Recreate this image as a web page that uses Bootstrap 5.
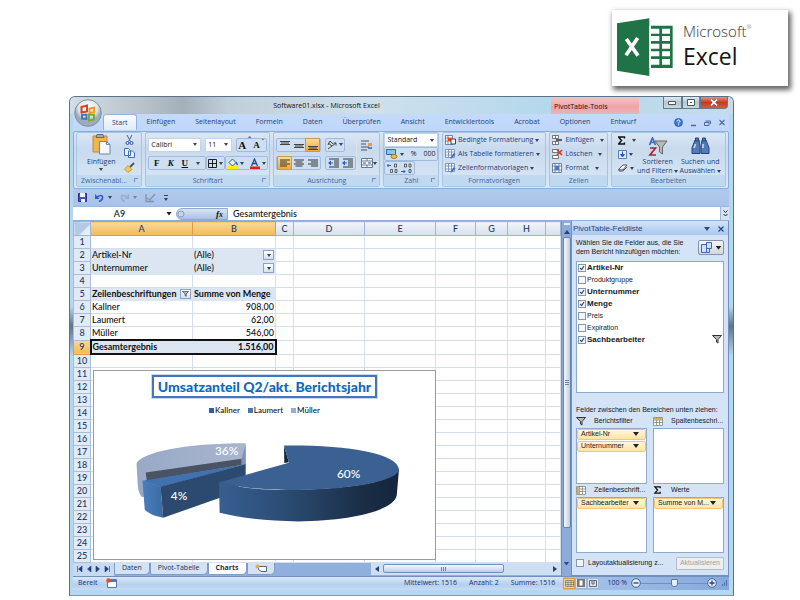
<!DOCTYPE html>
<html lang="de">
<head>
<meta charset="utf-8">
<meta name="viewport" content="width=device-width, initial-scale=1">
<title>Software01.xlsx - Microsoft Excel</title>
<link href="https://cdn.jsdelivr.net/npm/bootstrap@5.3.0/dist/css/bootstrap.min.css" rel="stylesheet">
<style>
:root{--ink:#1f3d7a;--arrow:url("data:image/svg+xml,%3Csvg xmlns='http://www.w3.org/2000/svg' viewBox='0 0 4 3'%3E%3Cpath d='M0 0h4L2 3z' fill='%23345'/%3E%3C/svg%3E")}
body{background:#fff;font-family:"Open Sans","Noto Sans",sans-serif;font-size:7px;font-weight:500;line-height:10px;color:#111}
button,select,input{font:inherit;color:inherit;border:0;background:none;padding:0;margin:0}
svg{display:block;flex:none}
.page-pad{padding:10px 66px 0 69px}
.brand-row{height:86px;margin-right:-54px}
.brand{width:176px;height:76px;background:#fff;box-shadow:2px 3px 5px 1px #666;padding:0 0 0 5px}
.brand-text{padding:0 0 2px 10px}
.brand-ms{font-size:15px;line-height:18px;font-weight:300;color:#333}
.brand-ms sup{font-size:6px;top:-8px}
.brand-xl{font-size:23px;line-height:32px;font-weight:400;color:#151515}
.win{border:1px solid #5b7187;border-radius:6px 6px 0 0;background:linear-gradient(#b5d7f0 0,#b5d7f0 42%,#5c7688 46%,#b5d7f0 52%,#b5d7f0);padding:0 4px 5px 3px;border-bottom:1px solid #7f9aac;position:relative}
.titlebar{height:17px;margin:0 -4px 0 -3px;border-radius:5px 5px 0 0;background:linear-gradient(90deg,#d3dde5 0,#b4bfc8 12%,#a3b0ba 17%,#c1cfda 24%,#cfe0ec 45%,#b4d8ec 72%,#c4dcea 100%)}
.orb-space{width:32px}
.ctx-title{width:88px;align-self:stretch;background:linear-gradient(#edc5ca,#f3a3a3 60%,#e2b6c2);padding:5px 3px 0}
.win-controls{width:94px;padding:0 5px 0 24px}
.wbtn{height:12px;border:1px solid #66788a;border-top:0;background:linear-gradient(#e3ebf1,#b4c6d4 50%,#c9dae6);width:19px}
.wbtn.close-x{width:28px;background:linear-gradient(#e09485,#c33b22 50%,#d35c40);border-radius:0 0 4px 0}
.orb{position:absolute;left:4px;top:2px;width:28px;height:28px}
.tabs{height:17px;background:linear-gradient(#c5dafa,#bfd7fa);padding-left:30px;color:var(--ink)}
.tabs button{padding:0 10px;height:16px}
.tabs .on{background:linear-gradient(#fafcff,#dfebf9);border:1px solid #93b1dc;border-bottom:0;border-radius:3px 3px 0 0;padding:0 8px}
.tabs .ctx{width:88px}
.tabs .mdi{width:94px;padding:0 4px 0 38px}
.ribbon{background:linear-gradient(#dbe7f5,#c9daee 30%,#d8e8f6);border:1px solid #8aaedb;border-radius:2px;height:58px;padding:0 2px 1px;gap:3px;color:var(--ink)}
.rgroup{border:1px solid #a9c3e3;border-radius:2px;min-width:0;display:flex;flex-direction:column;overflow:hidden}
.rbody{flex:1;min-height:0;padding:0 2px}
.rlabel{flex:none;background:#c1d8f1;height:11px;line-height:11px;color:#3f64a2;text-align:center;position:relative}
.rlabel i{position:absolute;right:3px;top:3px;width:4px;height:4px;border:1px solid #7090bd;border-right:0;border-bottom:0}
.g1{flex:66 1 0}.g2{flex:126 1 0}.g3{flex:108 1 0}.g4{flex:55 1 0}.g5{flex:105 1 0}.g6{flex:58 1 0}.g7{flex:116 1 0}
.cluster{border:1px solid #9fbbe0;border-radius:2px;background:#cfdff2;height:14px;display:inline-flex;align-items:center;gap:1px;padding:0 1px}
.cluster button{height:12px;min-width:13px;display:inline-flex;align-items:center;justify-content:center;gap:2px}
.cluster .hot{background:linear-gradient(#fbdb9a,#f3a838);box-shadow:0 0 0 1px #c69a50}
.serif{font-family:"Liberation Serif",serif;font-weight:700;color:#111;font-size:9px}
.serif.big{font-size:11px}
.dd{width:4px;height:3px;background:var(--arrow) center/4px 3px no-repeat;flex:none;display:inline-block}
.combo{appearance:none;background:#fff var(--arrow) right 3px center/4px 3px no-repeat;height:14px;padding:0 2px;color:#111;border:1px solid #c1d4ec;border-radius:0}
.combo.size{width:27px}
.line-btn{display:flex;align-items:center;gap:2px;height:14px;white-space:nowrap}
.big-btn{display:flex;flex-direction:column;align-items:center;line-height:9px;white-space:nowrap}
.qat{height:17px;background:linear-gradient(#b1c9ec,#a8c3ea);padding:0 5px;gap:8px}
.fbar{height:15px;background:#fff;border-top:1px solid #9db8df;border-bottom:1px solid #8fadd6;font-family:Lato,"Open Sans",sans-serif;font-size:9px}
.namebox{width:93px}
.fx-pill{width:52px;margin:1px 0 0 4px;height:12px;border-radius:6px 0 0 6px;background:linear-gradient(#d9e5f4,#a9c1e2);border:1px solid #8daad2;padding-right:4px}
.fbar input{flex:1;min-width:0;padding-left:5px;outline:0}
.fend{width:9px;background:#d5e3f5;border-left:1px solid #9db8df}
.sheet-wrap{flex:1;min-width:0;position:relative;background:#fff}
.grid{table-layout:fixed;width:100%;border-collapse:collapse;font-family:Lato,"Open Sans",sans-serif;font-size:9px;line-height:12px;background:#fff}
.grid th,.grid td{height:13px;padding:0 1px;border:1px solid #d4dfee;font-weight:500;white-space:nowrap;overflow:hidden}
.grid thead th{height:14px;padding-top:1px;background:linear-gradient(#f1f5fa,#d5dfea);border-color:#9fb5d3;text-align:center;color:#223a66}
.grid thead th.sel,.grid tbody th.sel{background:linear-gradient(#f9d89a,#f1bb57);border-color:#d99d4a}
.grid thead th.corner{background:linear-gradient(135deg,#b4c9e6 60%,#e6eef8 61%)}
.grid tbody th{background:#e1eaf5;text-align:center;color:#223a66;border-color:#a9bdd9}
.grid .pv td:nth-child(2),.grid .pv td:nth-child(3){background:#dce6f3;border-color:#dce6f3}
.grid .strong td{font-weight:700}
.grid .num{text-align:right}
.grid tr.total td:nth-child(2){border:2px solid #111;border-right:0}
.grid tr.total td:nth-child(3){border:2px solid #111;border-left:0}
.fbtn{float:right;width:11px;height:10px;margin-top:1px;border:1px solid #8da3c4;background:linear-gradient(#fff,#d4deed);display:flex;align-items:center;justify-content:center}
.chart{position:absolute;left:20px;top:149px;width:343px;height:190px;background:#fff;border:1px solid #9a9a9a;font-family:Lato,"Open Sans",sans-serif}
.chart-title{position:absolute;left:0;right:0;top:4px;text-align:center}
.chart-title span{display:inline-block;border:2px solid #4377b8;outline:1px solid #c9d9ee;color:#0e6ac0;font-size:14px;line-height:19px;font-weight:900;padding:0 4px}
.legend{position:absolute;left:0;right:0;top:34px;display:flex;justify-content:center;gap:8px;font-size:8px}
.legend b{display:inline-block;width:5px;height:5px;margin-right:1px}
.chart svg{width:100%;height:100%}
.sheet-tabs{height:13px;background:#8fb0dc;color:#1c2f55}
.sheet-tabs .navs{background:#c6daf4;height:100%;padding:0 4px}
.stab{background:#d3e2f5;border:1px solid #7e9cc8;border-top:0;height:12px;padding:0 7px;border-radius:0 0 5px 2px}
.stab.on{background:#fff;font-weight:700}
.hscroll{width:190px;height:12px;background:#cfdff2;gap:4px;padding:0 4px}
.thumb-h{width:121px;height:9px;border:1px solid #6f91c2;border-radius:2px;background:linear-gradient(#f6f9fd,#b9cde8)}
.vscroll{width:10px;background:#8dabd8;border-left:1px solid #6f90c0;padding:2px 0}
.thumb-v{width:8px;height:291px;border:1px solid #6484b4;border-radius:2px;background:linear-gradient(90deg,#f6f9fd,#bccde4)}
.pane{width:158px;background:#d4e3f5;border:1px solid #6f90c0;border-top:0;font-family:"Liberation Sans",sans-serif;color:#16191f;padding:0 4px}
.pane-head{height:14px;padding-top:2px;background:linear-gradient(#d3e4f9,#a9c7ed);margin:0 -4px;padding-left:1px;padding-right:4px;color:#1f4187;font-size:8px}
.pane-box{background:#fff;border:1px solid #8fa9cc}
.fields{height:132px;padding:0 1px}
.fields label{display:flex;align-items:center;gap:1px;height:12px;line-height:12px}
.fields .fw-bold{font-size:8px}
.chk{appearance:none;width:8px;height:8px;border:1px solid #8a97a8;background:#f4f6f8;flex:none}
.chk:checked{background:#f4f6f8 url("data:image/svg+xml,%3Csvg xmlns='http://www.w3.org/2000/svg' viewBox='0 0 8 8'%3E%3Cpath d='M1.500 4l2 2.200L6.600 1.500' fill='none' stroke='%23284a94' stroke-width='1.500'/%3E%3C/svg%3E") center/6px 6px no-repeat}
.zones{display:grid;grid-template-columns:1fr 1fr;gap:0 6px}
.zone-name{height:13px;gap:8px;white-space:nowrap}
.zone{height:56px}
.chip{width:100%;height:11px;margin-bottom:1px;background:linear-gradient(#fff6dc,#ffe3a3);border:1px solid #f3c678;border-radius:2px;padding:0 6px 0 3px;display:flex;justify-content:space-between;align-items:center;white-space:nowrap}
.tri{width:6px;height:4px;background:#222;clip-path:polygon(0 0,100% 0,50% 100%);flex:none}
.tri.blue{background:#2a4b88}
.view-btn{width:26px;height:15px;border:1px solid #8292a8;border-radius:2px;background:linear-gradient(#f3f5f7,#d3d8de)}
.update{border:1px solid #b5bdc8;background:#eceff0;color:#a2a29a;height:13px;padding:0 3px;border-radius:1px}
.status{height:14px;background:linear-gradient(#dbe8f8,#b4cff0 60%,#c7dbf4);border-top:1px solid #6f90c0;color:#1c2f6a;padding:0 5px}
.view{width:12px;height:11px;border:1px solid #9db5d6;background:#dce6f2;display:flex;align-items:center;justify-content:center}
.view.on{background:#fcd488;border-color:#d99d4a}
.zoombar{appearance:none;width:66px;height:11px;background:linear-gradient(#6f8fc0,#6f8fc0) center/100% 1px no-repeat}
.zoombar::-webkit-slider-thumb{appearance:none;width:7px;height:8px;border:1px solid #5b76a5;border-radius:1px 1px 3px 3px;background:#e6eefa}
.zr{background:linear-gradient(90deg,#a9c4ea,#86a9dc);height:13px;padding-right:1px;margin-right:-5px}
</style>
</head>
<body>
<svg width="0" height="0" class="position-absolute" aria-hidden="true">
<defs>
<symbol id="i-lines" viewBox="0 0 10 8"><path d="M0 1h10M0 3h7M0 5h10M0 7h7" stroke="#333" stroke-width="1"/></symbol>
<symbol id="i-linesc" viewBox="0 0 10 8"><path d="M0 1h10M1.500 3h7M0 5h10M1.500 7h7" stroke="#333"/></symbol>
<symbol id="i-linesr" viewBox="0 0 10 8"><path d="M0 1h10M3 3h7M0 5h10M3 7h7" stroke="#333"/></symbol>
<symbol id="i-vt" viewBox="0 0 10 10"><path d="M0 1.500h10M0 4.500h10M1 3h8" stroke="#444"/></symbol>
<symbol id="i-vm" viewBox="0 0 10 10"><path d="M0 4.500h10M0 7.500h10M1 6h8" stroke="#444"/></symbol>
<symbol id="i-vb" viewBox="0 0 10 10"><path d="M0 6.500h10M0 9.500h10M1 8h8" stroke="#444"/></symbol>
<symbol id="i-ind" viewBox="0 0 11 10"><path d="M1 1h10M6 3h5M6 5h5M6 7h5M1 9h10" stroke="#333"/><path d="M0 5l3-2.500v5z" fill="#2d5bb5"/><path d="M2 5h3" stroke="#2d5bb5"/></symbol>
<symbol id="i-funnel" viewBox="0 0 10 9"><path d="M.5.5h9L6 4.500v3.500L4.500 7V4.500z" fill="#bbb" stroke="#333"/></symbol>
<symbol id="i-cells" viewBox="0 0 11 10"><path d="M.5.5h6v3h-6zM.5 6.500h6v3h-6zM3.500.5v3M3.500 6.500v3" fill="#fff" stroke="#555" stroke-width=".8"/><path d="M4 5h6" stroke="#333" stroke-width="1.500"/></symbol>
<symbol id="i-tbl" viewBox="0 0 11 10"><path d="M.5.5h9v8h-9zM.5 3h9M.5 6h9M3.500 0v8M6.500 0v8" fill="#fff" stroke="#6b84ad" stroke-width=".8"/><path d="M5 9l4-5 1.500 1.500-4 4z" fill="#3a6ec4"/></symbol>
<symbol id="i-small" viewBox="0 0 10 9"><path d="M.5.5h9v8h-9zM.5 3h9M.5 5.500h9M3.500 0v8M6.500 0v8" fill="#fff" stroke="#777" stroke-width=".7"/><path d="M1 1h8v2H1z" fill="#d7b25c"/></symbol>
<symbol id="i-smallr" viewBox="0 0 10 9"><path d="M.5.5h9v8h-9zM.5 3h9M.5 5.500h9M3.500 0v8M6.500 0v8" fill="#fff" stroke="#777" stroke-width=".7"/><path d="M1 1h2.500v7H1z" fill="#d7b25c"/></symbol>
</defs>
</svg>

<div class="page-pad">
<header class="brand-row d-flex justify-content-end align-items-start">
  <div class="brand d-flex align-items-center">
    <svg width="56" height="60" viewBox="50 56 168 180" aria-hidden="true"><path d="M50 72l97-15v173l-97-16z" fill="#1f7346"/><path d="M150 79h67v127h-67z" fill="#1f7346"/><path d="M152 88h25v15h-25zM185 88h24v15h-24zM152 110h25v15h-25zM185 110h24v15h-24zM152 133h25v15h-25zM185 133h24v15h-24zM152 156h25v15h-25zM185 156h24v15h-24zM152 179h25v17h-25zM185 179h24v17h-24z" fill="#fff"/><path d="M147 79h5v127h-5z" fill="#fff"/><path d="M78 119l35 50M112 116l-35 52" stroke="#fff" stroke-width="11"/></svg>
    <div class="brand-text"><div class="brand-ms">Microsoft<sup>®</sup></div><div class="brand-xl">Excel</div></div>
  </div>
</header>

<main class="win">
  <div class="titlebar d-flex align-items-start">
    <div class="orb-space"></div>
    <div class="flex-grow-1 text-center pt-1">Software01.xlsx - Microsoft Excel</div>
    <div class="ctx-title">PivotTable-Tools</div>
    <div class="win-controls d-flex">
      <button class="wbtn d-flex justify-content-center align-items-center" aria-label="Minimieren"><svg width="8" height="4" viewBox="0 0 8 4"><path d="M.5.5h7v3h-7z" fill="#fff" stroke="#555"/></svg></button>
      <button class="wbtn d-flex justify-content-center align-items-center" aria-label="Wiederherstellen"><svg width="8" height="7" viewBox="0 0 8 7"><path d="M.5.5h7v6h-7z" fill="#fff" stroke="#555"/><path d="M3 3h2v1H3z" fill="#555"/></svg></button>
      <button class="wbtn close-x d-flex justify-content-center align-items-center" aria-label="Schließen"><svg width="8" height="7" viewBox="0 0 8 7"><path d="M1 .5l6 6M7 .5l-6 6" stroke="#733" stroke-width="2.800"/><path d="M1 .5l6 6M7 .5l-6 6" stroke="#fff" stroke-width="1.800"/></svg></button>
    </div>
  </div>

  <nav class="tabs d-flex">
    <button class="on">Start</button><button>Einfügen</button><button>Seitenlayout</button><button>Formeln</button><button>Daten</button><button>Überprüfen</button><button>Ansicht</button><button>Entwicklertools</button><button>Acrobat</button>
    <div class="ctx d-flex justify-content-between ms-auto"><button>Optionen</button><button class="px-0">Entwurf</button></div>
    <div class="mdi d-flex align-items-center justify-content-between">
      <svg width="9" height="9" viewBox="0 0 9 9"><circle cx="4.500" cy="4.500" r="4" fill="#3d79d8" stroke="#1e4b9c" stroke-width=".7"/><path d="M3 3.500q0-1.500 1.500-1.500T6 3.300Q6 4 4.600 4.800v.7M4.600 6.300v1" fill="none" stroke="#fff"/></svg>
      <svg width="6" height="8" viewBox="0 0 6 8"><path d="M0 6.500h5" stroke="#4e6996" stroke-width="1.500"/></svg>
      <svg width="7" height="6" viewBox="0 0 7 6"><path d="M1.500 1h5v3M.5 2.500h4.500v3H.5z" fill="none" stroke="#4e6996"/></svg>
      <svg width="6" height="7" viewBox="0 0 6 7"><path d="M.5 1l5 5M5.500 1l-5 5" stroke="#4e6996" stroke-width="1.100"/></svg>
    </div>
  </nav>
  <button class="orb" aria-label="Office"><svg width="28" height="28" viewBox="0 0 28 28"><defs><radialGradient id="og" cy=".3"><stop stop-color="#fff"/><stop offset=".7" stop-color="#dfe5ec"/><stop offset="1" stop-color="#9eabbb"/></radialGradient></defs><circle cx="14" cy="14" r="13.300" fill="url(#og)" stroke="#7f8fa5"/><g fill="none" stroke-width="2"><path d="M7.500 8l5.500-1.500v6l-5.500 1z" stroke="#d9431f"/><path d="M15.500 9.500l4.500-.8v4.500l-4.500.5z" stroke="#f29a2b"/><path d="M8 16l4.500-.5v4.500l-4.500-.5z" stroke="#3c76c8"/><path d="M15 15.500l5 .3v4.700l-5 1z" stroke="#7cae2a"/></g></svg></button>

  <section class="ribbon d-flex">
    <div class="rgroup g1"><div class="rbody d-flex justify-content-between">
      <button class="big-btn justify-content-between ps-2"><svg width="19" height="22" viewBox="0 0 19 22"><path d="M1 3h14v16H1z" fill="#efb454" stroke="#c08a34"/><path d="M5 1.500h6l1 3H4z" fill="#aab" stroke="#667"/><path d="M7.500 8.500h7l3.500 3v9.500H7.500z" fill="#f5f9ff" stroke="#6c86b1"/><path d="M14.500 8.500v3H18" fill="none" stroke="#6c86b1"/></svg><span>Einfügen</span><i class="dd mb-1"></i></button>
      <div class="d-flex flex-column justify-content-around align-items-center pe-1">
        <svg width="9" height="10" viewBox="0 0 9 10"><path d="M2 0l3.500 6.500M7 0L3.500 6.500" stroke="#46618f"/><circle cx="2.500" cy="8" r="1.500" fill="none" stroke="#2c55a8"/><circle cx="6.500" cy="8" r="1.500" fill="none" stroke="#2c55a8"/></svg>
        <svg width="11" height="10" viewBox="0 0 11 10"><path d="M.5.5h4l2 2v5h-6zM4.500 3h4l2 2v4.500h-6z" fill="#eaf2fe" stroke="#456fb5"/></svg>
        <svg width="11" height="11" viewBox="0 0 11 11"><path d="M10 1L6 5" stroke="#555" stroke-width="2"/><path d="M4 3.500l4 4L4 10.500.5 7z" fill="#f4c851" stroke="#b08828" stroke-width=".7"/></svg>
      </div></div><div class="rlabel text-start ps-1">Zwischenabl...<i></i></div></div>

    <div class="rgroup g2"><div class="rbody d-flex flex-column justify-content-evenly">
      <div class="d-flex gap-1"><select class="combo flex-grow-1" aria-label="Schriftart"><option>Calibri</option></select><select class="combo size" aria-label="Schriftgrad"><option>11</option></select>
        <span class="cluster"><button class="serif big">A<sup>ˆ</sup></button><button class="serif">A<sup>ˇ</sup></button></span></div>
      <div class="d-flex justify-content-between"><span class="cluster"><button class="serif">F</button><button class="serif fst-italic">K</button><button class="serif text-decoration-underline">U</button><i class="dd mx-1"></i></span>
        <span class="cluster"><button aria-label="Rahmen"><svg width="9" height="9" viewBox="0 0 9 9"><path d="M.5.5h8v8h-8zM4.500 0v9M0 4.500h9" fill="none" stroke="#222"/></svg><i class="dd"></i></button></span>
        <span class="cluster"><button aria-label="Füllfarbe"><svg width="11" height="11" viewBox="0 0 11 11"><path d="M1 8h10v3H1z" fill="#fdf000"/><path d="M2 4.500l3.500-3.500 3.500 3.500L5.500 8z" fill="#e8eef6" stroke="#555"/><path d="M9 4l1.500 3" stroke="#2c62c4" stroke-width="1.500"/></svg><i class="dd"></i></button><button class="ms-1" aria-label="Schriftfarbe"><svg width="11" height="11" viewBox="0 0 11 11"><path d="M1 8.500h10v2.500H1z" fill="#e51c1c"/><path d="M2.500 8l3-7 3 7M3.500 5.500h4" fill="none" stroke="#234a95" stroke-width="1.300"/></svg><i class="dd"></i></button></span></div>
      </div><div class="rlabel">Schriftart<i></i></div></div>

    <div class="rgroup g3"><div class="rbody d-flex justify-content-between">
      <div class="d-flex flex-column justify-content-evenly">
        <div class="d-flex gap-1"><span class="cluster"><button aria-label="Oben"><svg width="10" height="10"><use href="#i-vt"/></svg></button><button aria-label="Mitte"><svg width="10" height="10"><use href="#i-vm"/></svg></button><button class="hot" aria-label="Unten"><svg width="10" height="10"><use href="#i-vb"/></svg></button></span><span class="cluster"><button aria-label="Ausrichtung"><svg width="10" height="10" viewBox="0 0 10 10"><path d="M1 9L9 3M6.500 3H9v2.500M1 3l4 3M3 1l3 3M1 5l2-4" fill="none" stroke="#444"/></svg><i class="dd"></i></button></span></div>
        <div class="d-flex gap-1"><span class="cluster"><button class="hot" aria-label="Links"><svg width="10" height="8"><use href="#i-lines"/></svg></button><button aria-label="Zentriert"><svg width="10" height="8"><use href="#i-linesc"/></svg></button><button aria-label="Rechts"><svg width="10" height="8"><use href="#i-linesr"/></svg></button></span><span class="cluster"><button aria-label="Einzug verkleinern"><svg width="11" height="10"><use href="#i-ind"/></svg></button><button aria-label="Einzug vergrößern"><svg width="11" height="10"><use href="#i-ind"/></svg></button></span></div>
      </div>
      <div class="d-flex flex-column justify-content-evenly border-start ps-1">
        <svg width="12" height="11" viewBox="0 0 12 11"><path d="M0 1h8M0 4h5M0 7h8M0 10h6" stroke="#555"/><path d="M7 3h4v3H7z" fill="#e39a4c"/><path d="M11 8H7" stroke="#2c62c4" stroke-width="1.500"/></svg>
        <div class="d-flex align-items-center"><svg width="12" height="10" viewBox="0 0 12 10"><path d="M.5.5h11v9H.5zM.5 3h11M.5 7h11M6 0v3M6 7v3" fill="#fff" stroke="#678"/><path d="M2 5h3M7 5h3" stroke="#24c"/></svg><i class="dd"></i></div>
      </div></div><div class="rlabel">Ausrichtung<i></i></div></div>

    <div class="rgroup g4"><div class="rbody px-0">
      <select class="combo w-100 d-block" aria-label="Zahlenformat"><option>Standard</option></select>
      <div class="cluster d-flex justify-content-between mt-0"><button aria-label="Währung"><svg width="12" height="10" viewBox="0 0 12 10"><path d="M.5.5h9v5h-9z" fill="#8fc3e8" stroke="#3566a8"/><ellipse cx="8" cy="7.500" rx="3" ry="2" fill="#f1c24a" stroke="#a77c1c"/></svg><i class="dd"></i></button><button class="text-dark">%</button><button class="text-dark">000</button></div>
      <div class="cluster"><button aria-label="Dezimalstelle hinzufügen"><svg width="12" height="11" viewBox="0 0 12 11"><path d="M0 2.500h4M1.500 1L0 2.500 1.500 4" fill="none" stroke="#2c62c4"/><path d="M7.500 1h2v3h-2zM3.500 6.500h2v3h-2zM8 6.500h2v3H8z" fill="none" stroke="#444" stroke-width=".8"/></svg></button><button aria-label="Dezimalstelle löschen"><svg width="12" height="11" viewBox="0 0 12 11"><path d="M0 8.500h4M2.500 7L4 8.500 2.500 10" fill="none" stroke="#2c62c4"/><path d="M3.500 1h2v3h-2zM8 1h2v3H8zM8 6.500h2v3H8z" fill="none" stroke="#444" stroke-width=".8"/></svg></button></div>
      </div><div class="rlabel">Zahl<i></i></div></div>

    <div class="rgroup g5"><div class="rbody">
      <button class="line-btn"><svg width="11" height="10" viewBox="0 0 11 10"><path d="M.5.5h7v9h-7zM.5 3h7M.5 6h7M3 0v9" fill="#fff" stroke="#4a6fa8" stroke-width=".8"/><path d="M3 3h3v3H3z" fill="#e5432a"/><path d="M6 4h4.500v5H6z" fill="#fff" stroke="#345"/></svg>Bedingte Formatierung <i class="dd"></i></button>
      <button class="line-btn"><svg width="11" height="10"><use href="#i-tbl"/></svg>Als Tabelle formatieren <i class="dd"></i></button>
      <button class="line-btn"><svg width="11" height="10"><use href="#i-tbl"/></svg>Zellenformatvorlagen <i class="dd"></i></button>
      </div><div class="rlabel">Formatvorlagen</div></div>

    <div class="rgroup g6"><div class="rbody">
      <button class="line-btn"><svg width="11" height="10"><use href="#i-cells"/></svg>Einfügen <i class="dd ms-1"></i></button>
      <button class="line-btn"><svg width="11" height="10" viewBox="0 0 11 10"><path d="M.5.5h6v3h-6zM.5 6.500h6v3h-6z" fill="#fff" stroke="#555" stroke-width=".8"/><path d="M5 1l5 5M10 1L5 6" stroke="#e0301e" stroke-width="1.500"/></svg>Löschen <i class="dd ms-1"></i></button>
      <button class="line-btn"><svg width="11" height="10" viewBox="0 0 11 10"><path d="M.5.5h9v9h-9zM3 0v10M7 0v10M0 3h10M0 7h10" fill="#fff" stroke="#556c96" stroke-width=".8"/><path d="M3 3h4v4H3z" fill="#4777c6"/></svg>Format <i class="dd ms-1"></i></button>
      </div><div class="rlabel">Zellen</div></div>

    <div class="rgroup g7"><div class="rbody d-flex justify-content-between pe-1">
      <div><button class="line-btn ps-1" aria-label="Summe"><svg width="8" height="9" viewBox="1 0 8 9"><path d="M7.500 2.500V1H1.500l3 3.500-3 3.500h6V6.500" fill="none" stroke="#111" stroke-width="1.400"/></svg><i class="dd ms-1"></i></button>
      <button class="line-btn ps-1" aria-label="Füllbereich"><svg width="9" height="9" viewBox="0 0 9 9"><path d="M.5.5h8v8h-8z" fill="#e6effc" stroke="#5d7db2"/><path d="M4.500 1.500v4M2.500 4.500l2 2.500 2-2.500z" stroke="#1e56c8" fill="#1e56c8"/></svg><i class="dd"></i></button>
      <button class="line-btn ps-1" aria-label="Löschen"><svg width="10" height="8" viewBox="0 0 10 8"><path d="M1 5l4-4h4L5 6H1zM1 5v2h4l4-4" fill="#fff" stroke="#556"/></svg><i class="dd"></i></button></div>
      <button class="big-btn justify-content-end"><svg width="20" height="20" viewBox="0 0 20 20"><path d="M1.500 8L4.500 1l3 7M2.500 5.500h4" fill="none" stroke="#3e6dbb" stroke-width="1.700"/><path d="M2 11h5.500L2 18h6" fill="none" stroke="#9c3030" stroke-width="1.700"/><path d="M7 4h12l-4.500 6v7L11.500 15v-5z" fill="#b9b9b9" stroke="#666"/></svg><span>Sortieren</span><span>und Filtern <i class="dd"></i></span></button>
      <button class="big-btn justify-content-end"><svg width="19" height="20" viewBox="0 0 19 20"><g fill="#527cb8" stroke="#24457c"><path d="M4 3h4l1 6v7.500H1V11z"/><path d="M15 3h-4l-1 6v7.500h8V11z"/><path d="M4.500 1h3v3h-3zM11.500 1h3v3h-3z"/></g><path d="M3 11l1.500-4M12 11V7" stroke="#cfe0f7" stroke-width="1.500"/></svg><span>Suchen und</span><span>Auswählen <i class="dd"></i></span></button>
      </div><div class="rlabel">Bearbeiten</div></div>
  </section>

  <div class="qat d-flex align-items-center">
    <svg width="9" height="9" viewBox="0 0 9 9"><path d="M.5.5h8v8h-8z" fill="#4b50b4" stroke="#2c2f80"/><path d="M2 0h5v4H2zM3 6h4v3H3z" fill="#eef"/></svg>
    <span class="d-flex align-items-center gap-1"><svg width="9" height="8" viewBox="0 0 9 8"><path d="M2 3q5-3 5.500 0T4 7.500" fill="none" stroke="#2d5fc4" stroke-width="1.600"/><path d="M0 0v5h4.500z" fill="#2d5fc4"/></svg><i class="dd"></i></span>
    <span class="d-flex align-items-center gap-1 opacity-50"><svg width="9" height="8" viewBox="0 0 9 8"><path d="M7 3Q2 0 1.500 3T5 7.500" fill="none" stroke="#8a94a6" stroke-width="1.500"/><path d="M9 0v5H4.500z" fill="#8a94a6"/></svg><i class="dd"></i></span>
    <svg width="11" height="10" viewBox="0 0 11 10"><path d="M1 1v7.500h8M2 5l3 2 5-6" fill="none" stroke="#8492aa" stroke-width="1.300"/></svg>
    <svg width="4" height="6" viewBox="0 0 4 6"><path d="M0 .5h4" stroke="#345"/><path d="M0 3h4L2 6z" fill="#345"/></svg>
  </div>

  <div class="fbar d-flex align-items-center">
    <div class="namebox text-center">A9</div><i class="tri"></i>
    <div class="fx-pill d-flex justify-content-between align-items-center"><svg width="8" height="8"><circle cx="4" cy="4" r="3" fill="#c9d6e8" stroke="#8b9db8"/></svg><em class="serif">f<small>x</small></em></div>
    <input value="Gesamtergebnis" aria-label="Bearbeitungsleiste">
    <div class="fend d-flex justify-content-center align-items-center align-self-stretch"><svg width="5" height="7" viewBox="0 0 5 7"><path d="M.5.5l2 2 2-2M.5 4l2 2 2-2" fill="none" stroke="#223"/></svg></div>
  </div>

  <div class="d-flex">
    <div class="sheet-wrap d-flex flex-column">
      <table class="grid">
        <colgroup><col style="width:17px"><col style="width:102px"><col style="width:83px"><col style="width:18px"><col style="width:71px"><col style="width:71px"><col style="width:40px"><col style="width:32px"><col style="width:38px"><col></colgroup>
        <thead><tr><th class="corner"></th><th class="sel">A</th><th class="sel">B</th><th>C</th><th>D</th><th>E</th><th>F</th><th>G</th><th>H</th><th></th></tr></thead>
        <tbody id="rows"></tbody>
      </table>
      <div class="chart">
        <svg viewBox="24 15 1026 570" role="img" aria-label="Kreisdiagramm">
          <defs>
            <linearGradient id="side"><stop stop-color="#365f91"/><stop offset=".35" stop-color="#2c4d76"/><stop offset=".8" stop-color="#1a2d45"/><stop offset="1" stop-color="#15263c"/></linearGradient>
            <linearGradient id="grey" x2="1" y2="0"><stop stop-color="#98a9c6"/><stop offset="1" stop-color="#a9b5cf"/></linearGradient>
            <linearGradient id="lau"><stop stop-color="#4a7ebb"/><stop offset="1" stop-color="#3a6ba5"/></linearGradient>
          </defs>
          <path d="M149 295C165 262 290 234 480 234V300L250 390 165 397Q153 385 152 350z" fill="url(#grey)"/>
          <path d="M480 236L467 282V300H480z" fill="#8192b3"/>
          <path d="M177 323L467 281V300L180 348z" fill="#4a5364"/>
          <path d="M167 348L480 298 222 367z" fill="#3f72ae"/>
          <path d="M167 348L222 366 230 460Q190 453 174 436z" fill="url(#lau)"/>
          <path d="M222 366L480 298V352L400 400 230 460z" fill="#2c4a70"/>
          <path d="M596 242L611 292 597 294z" fill="#15293e"/>
          <path d="M399 353C470 372 560 378 640 375 800 372 930 352 945 310L938 392C930 440 790 470 640 471 540 469 460 460 401 445z" fill="url(#side)"/>
          <path d="M596 241C780 239 940 262 945 314 940 350 800 374 640 376 550 376 460 370 399 353L611 293z" fill="#3a6192"/>
          <g fill="#fff" font-family="Lato,'Open Sans',sans-serif" font-size="36" text-anchor="middle"><text x="422" y="270">36%</text><text x="278" y="405">4%</text><text x="792" y="339">60%</text></g>
        </svg>
        <div class="chart-title"><span>Umsatzanteil Q2/akt. Berichtsjahr</span></div>
        <div class="legend"><span><b style="background:#34608f"></b>Kallner</span><span><b style="background:#4577b4"></b>Laumert</span><span><b style="background:#9dabcb"></b>Müller</span></div>
      </div>
      <div class="sheet-tabs d-flex align-items-start mt-auto">
        <div class="navs d-flex align-items-center"><svg width="33" height="6" viewBox="0 0 33 6"><path d="M.5 0v6M5 0v6L1.500 3zM14 0v6l-3.500-3zM19 0v6l3.500-3zM28 0v6l3.500-3zM32.500 0v6" fill="#26417a" stroke="#26417a" stroke-width=".6"/></svg></div>
        <button class="stab">Daten</button><button class="stab">Pivot-Tabelle</button><button class="stab on">Charts</button><button class="stab" aria-label="Neues Blatt"><svg width="12" height="9" viewBox="0 0 12 9"><path d="M3.500 2.500h8v5h-5l-3-2z" fill="#fff" stroke="#567"/><circle cx="2.500" cy="2.500" r="2" fill="#f1a93c"/></svg></button>
        <div class="flex-grow-1"></div>
        <div class="hscroll d-flex align-items-center"><svg width="4" height="6"><path d="M4 0v6L0 3z" fill="#26417a"/></svg><div class="thumb-h d-flex align-items-center justify-content-center"><svg width="5" height="4"><path d="M.5 0v4M2.500 0v4M4.500 0v4" stroke="#6484b4"/></svg></div><div class="flex-grow-1"></div><svg width="4" height="6"><path d="M0 0v6l4-3z" fill="#26417a"/></svg></div>
      </div>
    </div>
    <div class="vscroll d-flex flex-column align-items-center">
      <svg width="6" height="14" viewBox="0 0 6 14"><path d="M0 1h6" stroke="#e6eefa" stroke-width="2"/><path d="M0 11h6L3 7z" fill="#26417a"/></svg>
      <div class="thumb-v d-flex align-items-center justify-content-center"><svg width="4" height="5"><path d="M0 .5h4M0 2.500h4M0 4.500h4" stroke="#6484b4"/></svg></div>
      <i class="tri blue mt-auto mb-2"></i>
    </div>
    <aside class="pane">
      <div class="pane-head d-flex align-items-center"><span class="flex-grow-1">PivotTable-Feldliste</span><i class="tri blue me-2"></i><svg width="6" height="6" viewBox="0 0 6 6"><path d="M.5.5l5 5M5.500.5l-5 5" stroke="#2a4b88" stroke-width="1.200"/></svg></div>
      <div class="d-flex justify-content-between align-items-center py-1"><div class="lh-sm text-nowrap">Wählen Sie die Felder aus, die Sie<br>dem Bericht hinzufügen möchten:</div>
        <button class="view-btn d-flex align-items-center justify-content-center gap-1" aria-label="Ansicht"><svg width="11" height="13" viewBox="0 0 11 13"><path d="M.5 3.500h5v8h-5zM5.500 1.500h5v6h-5zM5.500 7.500h3v4h-3z" fill="#cfe0f7" stroke="#3d68ad"/></svg><i class="tri"></i></button></div>
      <div class="pane-box fields">
        <label class="fw-bold"><input class="chk" type="checkbox" checked>Artikel-Nr</label>
        <label><input class="chk" type="checkbox">Produktgruppe</label>
        <label class="fw-bold"><input class="chk" type="checkbox" checked>Unternummer</label>
        <label class="fw-bold"><input class="chk" type="checkbox" checked>Menge</label>
        <label><input class="chk" type="checkbox">Preis</label>
        <label><input class="chk" type="checkbox">Expiration</label>
        <label class="fw-bold"><input class="chk" type="checkbox" checked><span class="flex-grow-1">Sachbearbeiter</span><svg width="10" height="9"><use href="#i-funnel"/></svg></label>
      </div>
      <div class="pt-2 mt-1 text-nowrap">Felder zwischen den Bereichen unten ziehen:</div>
      <div class="zones">
        <div><div class="zone-name d-flex align-items-center"><svg width="10" height="9"><use href="#i-funnel"/></svg>Berichtsfilter</div><div class="pane-box zone"><button class="chip">Artikel-Nr<i class="tri"></i></button><button class="chip">Unternummer<i class="tri"></i></button></div></div>
        <div><div class="zone-name d-flex align-items-center"><svg width="10" height="9"><use href="#i-small"/></svg>Spaltenbeschri...</div><div class="pane-box zone"></div></div>
        <div><div class="zone-name d-flex align-items-center"><svg width="10" height="9"><use href="#i-smallr"/></svg>Zeilenbeschrift...</div><div class="pane-box zone"><button class="chip">Sachbearbeiter<i class="tri"></i></button></div></div>
        <div><div class="zone-name d-flex align-items-center"><svg width="10" height="8" viewBox="0 0 10 9"><path d="M7.500 2.500V1H1.500l3 3.500-3 3.500h6V6.500" fill="none" stroke="#111" stroke-width="1.400"/></svg>Werte</div><div class="pane-box zone"><button class="chip">Summe von M...<i class="tri"></i></button></div></div>
      </div>
      <div class="d-flex align-items-center justify-content-between pt-1"><label class="d-flex align-items-center gap-1 text-nowrap"><input class="chk" type="checkbox">Layoutaktualisierung z...</label><button class="update" disabled>Aktualisieren</button></div>
    </aside>
  </div>

  <footer class="status d-flex align-items-center">
    <span>Bereit</span><svg class="ms-2 me-auto" width="11" height="10" viewBox="0 0 11 10"><path d="M1.500 1.500h9v8h-9z" fill="#fff" stroke="#5577a8"/><path d="M1.500 2h9v2h-9z" fill="#5577a8"/><circle cx="2.500" cy="2.500" r="2.300" fill="#e2502a"/></svg>
    <span>Mittelwert: 1516</span><span class="ms-2 ps-1">Anzahl: 2</span><span class="ms-2 ps-1 me-2">Summe: 1516</span>
    <div class="zr d-flex align-items-center">
      <button class="view on" aria-label="Normal"><svg width="9" height="7" viewBox="0 0 9 7"><path d="M.5.5h8v6h-8zM3 0v7M6 0v7M0 2.500h9M0 4.500h9" fill="none" stroke="#777" stroke-width=".7"/></svg></button><button class="view" aria-label="Seitenlayout"><svg width="8" height="8" viewBox="0 0 8 8"><path d="M0 0h8v8H0z" fill="#777"/><path d="M2.500 1.500h3v5h-3z" fill="#fff"/></svg></button><button class="view" aria-label="Umbruchvorschau"><svg width="8" height="7" viewBox="0 0 8 7"><path d="M.5.5h7v6h-7zM3 0v4h2V0" fill="none" stroke="#667"/></svg></button>
      <span class="ms-2 me-1">100 %</span>
      <svg width="10" height="10" viewBox="0 0 10 10"><circle cx="5" cy="5" r="4.300" fill="#e6eefa" stroke="#45608f"/><path d="M2.500 5h5" stroke="#26417a" stroke-width="1.300"/></svg>
      <input class="zoombar" type="range" value="50" aria-label="Zoom">
      <svg width="10" height="10" viewBox="0 0 10 10"><circle cx="5" cy="5" r="4.300" fill="#e6eefa" stroke="#45608f"/><path d="M2.500 5h5M5 2.500v5" stroke="#26417a" stroke-width="1.300"/></svg>
      <svg class="ms-1" width="7" height="7"><path d="M5 1h1M3 3h1M5 3h1M1 5h1M3 5h1M5 5h1" stroke="#3d5f9c" stroke-width="1.500"/></svg>
    </div>
  </footer>
</main>
</div>
<script>
const drop='<button class="fbtn" aria-label="Filter"><i class="dd"></i></button>';
const flt='<button class="fbtn" aria-label="Filter"><svg width="7" height="6"><use href="#i-funnel"/></svg></button>';
const data={2:['pv','Artikel-Nr',drop+'(Alle)'],3:['pv','Unternummer',drop+'(Alle)'],5:['pv strong',flt+'Zeilenbeschriftungen','Summe von Menge'],
6:['n','Kallner','908,00'],7:['n','Laumert','62,00'],8:['n','Müller','546,00'],9:['pv strong total n','Gesamtergebnis','1.516,00']};
let html='';
for(let r=1;r<=25;r++){const d=data[r]||['','',''];
html+=`<tr class="${d[0]}"><th class="${r===9?'sel':''}">${r}</th><td>${d[1]}</td><td class="${/\bn$/.test(d[0])?'num':''}">${d[2]}</td>${'<td></td>'.repeat(7)}</tr>`}
document.getElementById('rows').innerHTML=html;
</script>
<script src="https://cdn.jsdelivr.net/npm/bootstrap@5.3.0/dist/js/bootstrap.bundle.min.js"></script>
</body>
</html>
